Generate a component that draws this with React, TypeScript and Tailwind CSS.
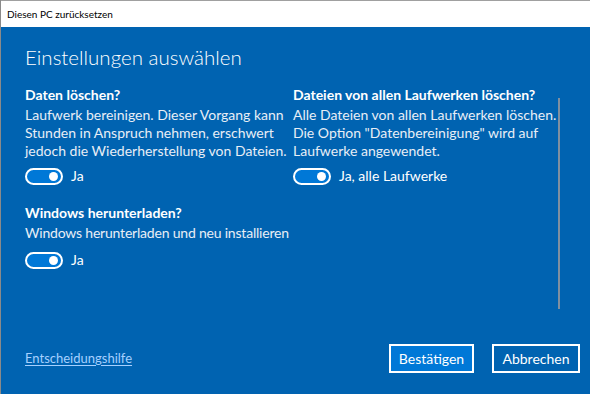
const FONT = { fontFamily: 'Lato, "Noto Sans", sans-serif' };

function Toggle({ label }: { label: string }) {
  return (
    <div className="flex items-center gap-[8px]">
      <div className="w-[38px] h-[17px] rounded-full border-2 border-white bg-[#0078d7] flex items-center justify-end pr-[3px]">
        <div className="w-[9px] h-[9px] rounded-full bg-white" />
      </div>
      <span className="text-[14px] leading-[18px] text-white">{label}</span>
    </div>
  );
}

export default function App() {
  return (
    <div
      className="w-[590px] h-[394px] flex flex-col overflow-hidden border-l border-[#8a8a8a]"
      style={FONT}
    >
      {/* Title bar */}
      <div className="h-[27px] bg-white border-t border-[#a0a0a0] flex items-center px-[6px]">
        <span className="text-[10px] text-black">Diesen PC zurücksetzen</span>
      </div>

      {/* Body */}
      <div className="flex-1 bg-[#0063b1] flex flex-col pl-[24px] pr-[10px]">
        <h1 className="text-[20.5px] font-light text-white mt-[16px] leading-[28px]">
          Einstellungen auswählen
        </h1>

        <div className="flex mt-[15px]">
          <div className="flex flex-1">
            <div className="w-[268px] flex flex-col">
              <p className="text-[14px] font-bold text-white leading-[18px]">Daten löschen?</p>
              <p className="text-[14px] text-[#e8eef6] leading-[18px] mt-[2px] whitespace-nowrap">
                Laufwerk bereinigen. Dieser Vorgang kann
                <br />
                Stunden in Anspruch nehmen, erschwert
                <br />
                jedoch die Wiederherstellung von Dateien.
              </p>
              <div className="mt-[7px]">
                <Toggle label="Ja" />
              </div>

              <p className="text-[14px] font-bold text-white leading-[18px] mt-[19px]">
                Windows herunterladen?
              </p>
              <p className="text-[14px] text-[#e8eef6] leading-[18px] mt-[2px] whitespace-nowrap tracking-[-0.2px]">
                Windows herunterladen und neu installieren
              </p>
              <div className="mt-[9px]">
                <Toggle label="Ja" />
              </div>
            </div>

            <div className="flex flex-col">
              <p className="text-[14px] font-bold text-white leading-[18px]">
                Dateien von allen Laufwerken löschen?
              </p>
              <p className="text-[14px] text-[#e8eef6] leading-[18px] mt-[2px] whitespace-nowrap">
                Alle Dateien von allen Laufwerken löschen.
                <br />
                Die Option "Datenbereinigung" wird auf
                <br />
                Laufwerke angewendet.
              </p>
              <div className="mt-[7px]">
                <Toggle label="Ja, alle Laufwerke" />
              </div>
            </div>
          </div>

          {/* Scrollbar */}
          <div className="w-[2px] h-[211px] bg-[#7f8fa0] mt-[12px] mr-[20px]" />
        </div>

        {/* Footer */}
        <div className="mt-auto mb-[21px] h-[29px] flex items-center justify-between">
          <a className="text-[13px] text-[#a6d0ff] underline underline-offset-2">Entscheidungshilfe</a>
          <div className="flex gap-[18px]">
            <button className="w-[85px] h-[29px] border-2 border-white bg-[#0078d7] text-[14px] text-white">
              Bestätigen
            </button>
            <button className="w-[88px] h-[29px] border-2 border-white bg-transparent text-[14px] text-white">
              Abbrechen
            </button>
          </div>
        </div>
      </div>
    </div>
  );
}
